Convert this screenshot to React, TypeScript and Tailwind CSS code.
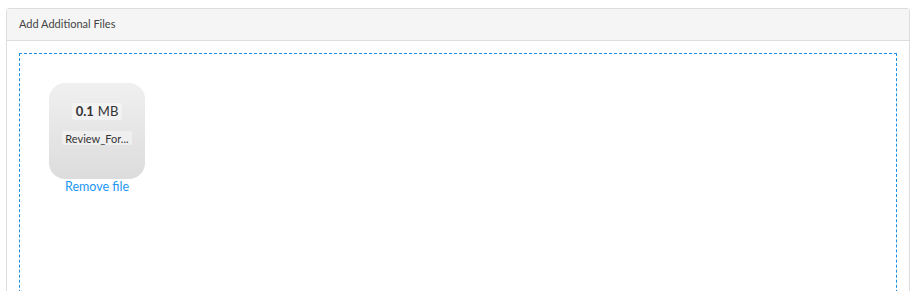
export default function App() {
  return (
    <div className="w-[915px] h-[291px] bg-white pt-2 pl-[6px] pr-[5px] overflow-hidden font-['Lato',sans-serif]">
      <div className="border border-[#dddddd] rounded-t-[3px] h-[300px] flex flex-col">
        <div className="shrink-0 h-[32px] bg-[#f5f5f5] border-b border-[#dddddd] px-3 flex items-center text-[11px] text-[#444]">
          Add Additional Files
        </div>
        <div className="flex-1 px-3 pt-3">
          <div className="h-[260px] border border-dashed border-[#1a8fe3] p-[29px]">
            <div className="w-[96px] flex flex-col items-center">
              <div className="w-[96px] h-[96px] rounded-[16px] bg-gradient-to-b from-[#f0f0f0] to-[#dcdcdc] flex flex-col items-center pt-[20px]">
                <div className="px-[4px] h-[17px] flex items-center bg-white/40 rounded-[2px] text-[13px] text-[#333] leading-none">
                  <span className="font-bold">0.1</span>
                  <span className="ml-[4px]">MB</span>
                </div>
                <div className="mt-[11px] px-[3px] h-[14px] flex items-center bg-white/40 rounded-[2px] text-[11px] text-[#333] leading-none">
                  Review_For...
                </div>
              </div>
              <a className="mt-[1px] text-[12.5px] text-[#2196f3] leading-[14px]">Remove file</a>
            </div>
          </div>
        </div>
      </div>
    </div>
  );
}
